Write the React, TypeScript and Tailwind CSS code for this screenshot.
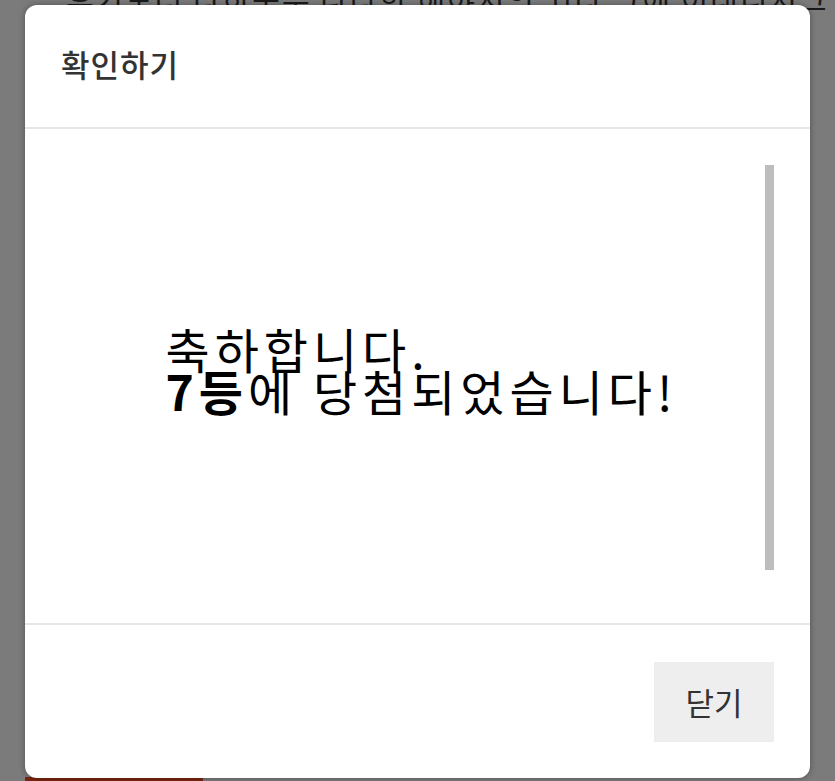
export default function App() {
  return (
    <div
      className="relative h-[781px] w-[835px] overflow-hidden bg-[#7b7b7b]"
      style={{ fontFamily: '"Noto Sans CJK KR", "Noto Sans", sans-serif' }}
    >
      {/* page behind the modal */}
      <div className="mt-[-20px] pl-[66px] text-[30px] leading-[36px] tracking-[2px] whitespace-nowrap text-[#1a1a1a]">
        후기보러 타하구우 나라한 해야지의 되라 그에 이래니지그
      </div>
      <div className="absolute bottom-0 left-[25px] h-[4px] w-[178px] bg-[#7a2510]" />

      {/* modal */}
      <div className="absolute left-[25px] top-[5px] flex h-[773px] w-[785px] flex-col overflow-hidden rounded-[12px] bg-white shadow-[0_0_6px_rgba(0,0,0,0.35)]">
        <div className="flex h-[124px] items-center border-b-2 border-[#e6e6e6] pl-[36px] pb-[4px]">
          <h1 className="text-[31px] tracking-[1px] font-medium text-[#333]">확인하기</h1>
        </div>

        <div className="relative flex h-[494px] items-center justify-center pb-[14px] pl-[8px]">
          <p className="text-[48px] leading-[42px] tracking-[5px] text-black">
            축하합니다.
            <br />
            <b className="font-bold">7등</b>에 당첨되었습니다!
          </p>
          <div className="absolute right-[36px] top-[36px] h-[405px] w-[9px] bg-[#bdbdbd]" />
        </div>

        <div className="flex flex-1 items-start justify-end border-t-2 border-[#e6e6e6] pr-[36px] pt-[37px]">
          <button className="flex h-[80px] w-[120px] items-center justify-center bg-[#eeeeee] text-[31px] text-[#333]">
            닫기
          </button>
        </div>
      </div>
    </div>
  );
}
